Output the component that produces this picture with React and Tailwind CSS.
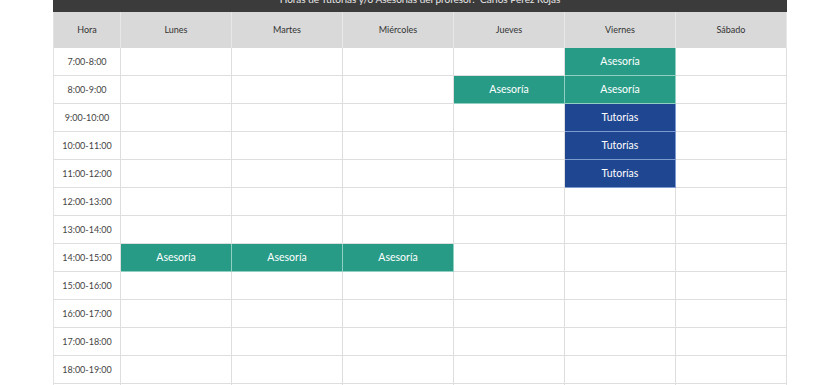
import React from "react";

const days = ["Lunes", "Martes", "Miércoles", "Jueves", "Viernes", "Sábado"];
const hours = [
  "7:00-8:00", "8:00-9:00", "9:00-10:00", "10:00-11:00", "11:00-12:00", "12:00-13:00",
  "13:00-14:00", "14:00-15:00", "15:00-16:00", "16:00-17:00", "17:00-18:00", "18:00-19:00",
  "19:00-20:00",
];

const slots = {
  "0-4": "A",
  "1-3": "A",
  "1-4": "A",
  "2-4": "T",
  "3-4": "T",
  "4-4": "T",
  "7-0": "A",
  "7-1": "A",
  "7-2": "A",
};

export default function App() {
  return (
    <div className="w-[840px] h-[385px] overflow-hidden bg-white" style={{ fontFamily: "Lato, 'Open Sans', sans-serif" }}>
      <div className="w-[734px] mx-auto">
        <div className="h-[26px] -mt-[14px] bg-[#3b3b3b] flex items-center justify-center text-[10px] text-[#e8e8e8]">
          Horas de Tutorías y/o Asesorías del profesor:&nbsp; Carlos Pérez Rojas
        </div>
        <div className="grid grid-cols-[67px_repeat(6,111px)] border-l border-[#e2e2e2]">
          <div className="h-[36px] bg-[#d9d9d9] border-r border-[#e8e8e8] flex items-center justify-center text-[9px] text-[#333]">Hora</div>
          {days.map((d) => (
            <div key={d} className="h-[36px] bg-[#d9d9d9] border-r border-[#e8e8e8] flex items-center justify-center text-[9px] text-[#333]">{d}</div>
          ))}
          {hours.map((h, r) => (
            <React.Fragment key={h}>
              <div className="h-[28px] border-r border-b border-[#dedede] flex items-center justify-center text-[9px] text-[#444]">{h}</div>
              {days.map((d, c) => {
                const s = slots[`${r}-${c}`];
                if (s === "A") {
                  return (
                    <div key={d} className="h-[28px] bg-[#289b86] border-r border-b border-[#8fd0c3] flex items-center justify-center text-[10.5px] text-white">Asesoría</div>
                  );
                }
                if (s === "T") {
                  return (
                    <div key={d} className="h-[28px] bg-[#1f4690] border-r border-b border-[#7e9bd0] flex items-center justify-center text-[10.5px] text-white">Tutorías</div>
                  );
                }
                return <div key={d} className="h-[28px] border-r border-b border-[#dedede]" />;
              })}
            </React.Fragment>
          ))}
        </div>
      </div>
    </div>
  );
}
